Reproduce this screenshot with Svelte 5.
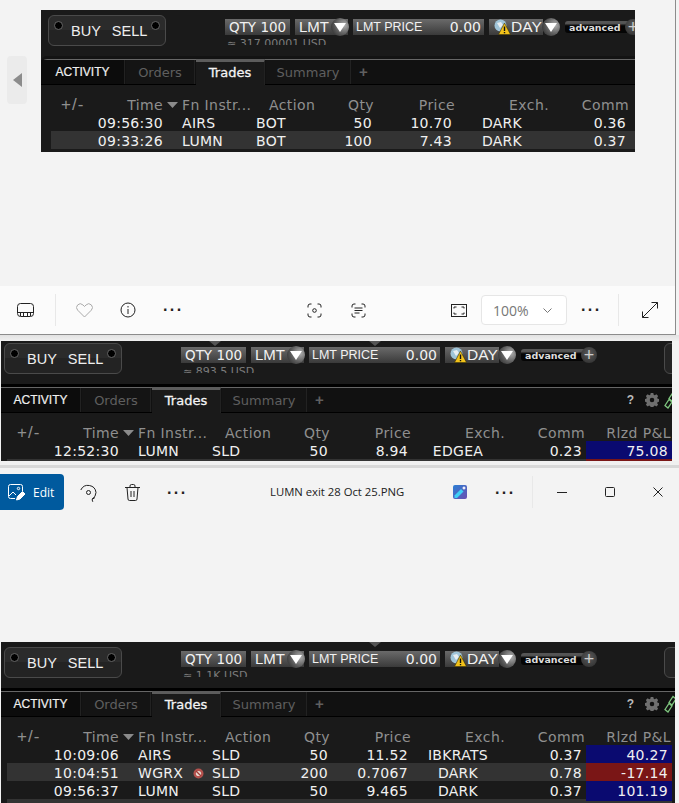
<script>
  const first = [
    { time: "09:56:30", sym: "AIRS", side: "BOT", qty: "50", price: "10.70", exch: "DARK", comm: "0.36" },
    { time: "09:33:26", sym: "LUMN", side: "BOT", qty: "100", price: "7.43", exch: "DARK", comm: "0.37" },
    { blank: true },
  ];
  const second = [
    { time: "12:52:30", sym: "LUMN", side: "SLD", qty: "50", price: "8.94", exch: "EDGEA", comm: "0.23", pnl: "75.08" },
    { blank: true, pnl: "", loss: true },
  ];
  const third = [
    { time: "10:09:06", sym: "AIRS", side: "SLD", qty: "50", price: "11.52", exch: "IBKRATS", comm: "0.37", pnl: "40.27" },
    { time: "10:04:51", sym: "WGRX", flag: true, side: "SLD", qty: "200", price: "0.7067", exch: "DARK", comm: "0.78", pnl: "-17.14", loss: true },
    { time: "09:56:37", sym: "LUMN", side: "SLD", qty: "50", price: "9.465", exch: "DARK", comm: "0.37", pnl: "101.19" },
    { blank: true },
  ];
</script>

{#snippet tradePanel(kind, usd, rows, full)}
  <section class="panel {kind}">
    <div class="order-bar">
      <div class="buysell">
        <i class="hole left"></i>
        <span>BUY</span><span class="sell">SELL</span>
        <i class="hole right"></i>
      </div>
      <div class="params">
        <div class="chips">
          <div class="chip qty">QTY 100</div>
          <div class="chip lmt">LMT{@render drop()}</div>
          <div class="chip price"><span>LMT PRICE</span><b>0.00</b></div>
          <div class="chip day">
            <svg width="17" height="16" viewBox="0 0 17 16">
              <circle cx="6.500" cy="6.500" r="6" fill="#9fc4d8" />
              <path d="M3 4l4-1 2 3-3 3zM9 9l3-1v3z" fill="#e8eef2" />
              <path d="M10.500 4l6 11.500h-12z" fill="#f2c21a" stroke="#3a3000" stroke-width=".6" />
              <path d="M10.500 7.500v4.500M10.500 13v1.200" stroke="#111" stroke-width="1.400" />
            </svg>
            <span>DAY</span>{@render drop()}
          </div>
          <div class="advanced"><span>advanced</span><i class="plus-btn">+</i></div>
        </div>
        <div class="usd">≈ {usd} USD</div>
      </div>
      <div class="next-btn"></div>
    </div>
    <div class="tabs">
      <div class="tab activity">ACTIVITY</div>
      <div class="tab orders">Orders</div>
      <div class="tab active">Trades</div>
      <div class="tab summary">Summary</div>
      <div class="add-tab">+</div>
      {#if full}
        <div class="tools">
          <span class="help">?</span>
          <svg class="gear" width="14" height="14" viewBox="0 0 16 16">
            <path fill="#6f6f6f" fill-rule="evenodd" d="M6.500 0h3l.4 2 1.300.6 1.800-1.100 2 2-1.100 1.800.6 1.300 2 .4v3l-2 .4-.6 1.300 1.100 1.800-2 2-1.800-1.100-1.300.6-.4 2h-3l-.4-2-1.300-.6-1.800 1.100-2-2 1.100-1.800-.6-1.300-2-.4v-3l2-.4.6-1.300-1.100-1.800 2-2 1.800 1.100 1.300-.6zM8 5.400a2.600 2.600 0 1 0 0 5.200 2.600 2.600 0 0 0 0-5.200z" />
          </svg>
          <svg class="link" width="14" height="18" viewBox="0 0 14 18">
            <path d="M9 1.500l3 2.500-4 6-3-2.500zM5 8.500l3 2.500-4 6-3-2.500z" fill="none" stroke="#7fc77f" stroke-width="1.300" />
          </svg>
        </div>
      {/if}
    </div>
    <div class="head cols-head">
      <span class="pm">+/-</span>
      <span class="r">Time</span>
      <svg class="sort" width="11" height="6" viewBox="0 0 11 6"><path d="M0 0h11L5.500 6z" fill="#8a8a8a" /></svg>
      <span>Fn Instr...</span>
      <span>Action</span>
      <span class="r">Qty</span>
      <span class="r">Price</span>
      <span class="r">Exch.</span>
      <span class="r">Comm</span>
      {#if full}<span class="r">Rlzd P&amp;L</span>{/if}
    </div>
    <div class="rows">
      {#each rows as row}
        <div class="row cols-row">
          {#if !row.blank}
            <span class="r">{row.time}</span>
            <span class="sym">{row.sym}
              {#if row.flag}
                <svg width="11" height="11" viewBox="0 0 11 11">
                  <circle cx="5.500" cy="5.500" r="5" fill="#b5524e" />
                  <circle cx="5.500" cy="5.500" r="2.600" fill="#e8d8d0" />
                  <path d="M3 3l5 5" stroke="#a03a36" stroke-width="1.200" />
                </svg>
              {/if}
            </span>
            <span>{row.side}</span>
            <span class="r">{row.qty}</span>
            <span class="r">{row.price}</span>
            <span class="c">{row.exch}</span>
            <span class="r">{row.comm}</span>
          {:else}
            <span></span><span></span><span></span><span></span><span></span><span></span><span></span>
          {/if}
          {#if row.pnl !== undefined}
            <span class="pnl" class:loss={row.loss}>{row.pnl}</span>
          {/if}
        </div>
      {/each}
    </div>
    <i class="caret c1"></i>
    <i class="caret c2"></i>
  </section>
{/snippet}

{#snippet drop()}
  <i class="drop"><svg width="12" height="9" viewBox="0 0 12 9"><path d="M0 0h12L6 9z" fill="#fff" /></svg></i>
{/snippet}

<div class="page">
  <div class="viewer">
    <div class="stage">
      <div class="pager">
        <svg width="9" height="14" viewBox="0 0 9 14"><path d="M9 0v14L0 7z" fill="#8c8c8c" /></svg>
      </div>
      {@render tradePanel("p-first", "317.00001", first, false)}
    </div>
    <div class="viewer-bar">
      <svg class="film" width="17" height="14" viewBox="0 0 17 14" fill="none" stroke="#222">
        <rect x=".5" y=".5" width="16" height="13" rx="3" />
        <path d="M.5 9.500h16M3.500 10v3M6.500 10v3M10.500 10v3M13.500 10v3" />
      </svg>
      <i class="rule r1"></i>
      <svg class="heart" width="17" height="15" viewBox="0 0 17 15" fill="none" stroke="#aaa">
        <path d="M8.500 14L1.700 7.200a3.700 3.700 0 0 1 5.200-5.300l1.600 1.600 1.600-1.600a3.700 3.700 0 0 1 5.200 5.300z" />
      </svg>
      <svg class="info" width="16" height="16" viewBox="0 0 16 16" fill="none" stroke="#222">
        <circle cx="8" cy="8" r="7" />
        <path d="M8 7v5M8 4v1.500" />
      </svg>
      <span class="dots d1">···</span>
      <svg class="scan" width="15" height="15" viewBox="0 0 15 15" fill="none" stroke="#222">
        <path d="M1 4.500V3a2 2 0 0 1 2-2h1.500M10.500 1H12a2 2 0 0 1 2 2v1.500M14 10.500V12a2 2 0 0 1-2 2h-1.500M4.500 14H3a2 2 0 0 1-2-2v-1.500" />
        <circle cx="7.500" cy="7.500" r="1.800" />
      </svg>
      <svg class="textscan" width="15" height="15" viewBox="0 0 15 15" fill="none" stroke="#222">
        <path d="M1 4.500V3a2 2 0 0 1 2-2h1.500M10.500 1H12a2 2 0 0 1 2 2v1.500M14 10.500V12a2 2 0 0 1-2 2h-1.500M4.500 14H3a2 2 0 0 1-2-2v-1.500" />
        <path d="M3.500 5h8M3.500 7.500h8M3.500 10h5" />
      </svg>
      <svg class="fit" width="16" height="13" viewBox="0 0 16 13" fill="none" stroke="#222">
        <rect x=".5" y=".5" width="15" height="12" />
        <path d="M3 4.500V3h2.500M10.500 3H13v1.500M13 8.500V10h-2.500M5.500 10H3V8.500" />
      </svg>
      <div class="zoom-select">
        <span>100%</span>
        <svg width="9" height="5" viewBox="0 0 9 5" fill="none" stroke="#777"><path d="M.5.500l4 4 4-4" /></svg>
      </div>
      <span class="dots d2">···</span>
      <i class="rule r2"></i>
      <svg class="expand" width="16" height="16" viewBox="0 0 16 16" fill="none" stroke="#222">
        <path d="M9.500.500h6v6M15.500.500L.5 15.500M.5 9.500v6h6" />
      </svg>
    </div>
  </div>
  <div class="shadow"></div>

  {@render tradePanel("p-second", "893.5", second, true)}

  <div class="band"></div>
  <div class="photos-bar">
    <button class="edit">
      <svg width="18" height="17" viewBox="0 0 18 17" fill="none" stroke="#fff">
        <path d="M7 14.500H2.500a2 2 0 0 1-2-2v-10a2 2 0 0 1 2-2h10a2 2 0 0 1 2 2V7" />
        <path d="M1 12l4-4 3 3" />
        <circle cx="10.500" cy="4.500" r="1.200" />
        <path d="M8.500 16l1-3.500 5-5 2.500 2.500-5 5z" fill="#fff" />
      </svg>
      <span>Edit</span>
    </button>
    <svg class="rotate" width="17" height="18" viewBox="0 0 17 18" fill="none" stroke="#222">
      <path d="M.8 6A8 8 0 0 1 16 8.500a8 8 0 0 1-4 6.700" />
      <path d="M15 13.500l-3 2 .8 2.300" />
      <circle cx="8.500" cy="8.500" r="2" />
    </svg>
    <svg class="trash" width="15" height="17" viewBox="0 0 15 17" fill="none" stroke="#222">
      <path d="M0 3.500h15M5 3.500V2a1.500 1.500 0 0 1 1.500-1.500h2A1.500 1.500 0 0 1 10 2v1.500M2 3.500l1 11.500a1.500 1.500 0 0 0 1.500 1.500h6A1.500 1.500 0 0 0 12 15l1-11.500M6 7v6M9 7v6" />
    </svg>
    <span class="dots d3">···</span>
    <span class="title">LUMN exit 28 Oct 25.PNG</span>
    <svg class="designer" width="14" height="14" viewBox="0 0 14 14">
      <defs>
        <linearGradient id="designer-bg" x1="0" y1="0" x2="1" y2="1">
          <stop offset="0" stop-color="#2b7fd4" />
          <stop offset="1" stop-color="#6a4fb0" />
        </linearGradient>
      </defs>
      <rect width="14" height="14" rx="2" fill="url(#designer-bg)" />
      <path d="M1.500 10.500L8 4l2.500 2.500L4 13H1.500z" fill="#3ed0f5" />
      <path d="M11 1l.7 1.300L13 3l-1.300.7L11 5l-.7-1.300L9 3l1.300-.7z" fill="#fff" />
    </svg>
    <span class="dots d4">···</span>
    <i class="rule r3"></i>
    <svg class="minimize" width="10" height="10" viewBox="0 0 10 10"><path d="M0 5.500h10" stroke="#222" /></svg>
    <svg class="maximize" width="10" height="10" viewBox="0 0 10 10" fill="none"><rect x=".5" y=".5" width="9" height="9" rx="1" stroke="#222" /></svg>
    <svg class="close" width="10" height="10" viewBox="0 0 10 10"><path d="M.5.500l9 9M9.500.500l-9 9" stroke="#222" /></svg>
  </div>

  {@render tradePanel("p-third", "1.1K", third, true)}
</div>

<style>
  :global(body) {
    margin: 0;
    background: #f3f3f3;
  }

  .page {
    width: 679px;
    height: 803px;
    overflow: hidden;
    background: #f3f3f3;
    font-family: "Open Sans", "Liberation Sans", sans-serif;
  }

  .viewer {
    width: 675px;
    height: 334px;
    border-right: 1px solid #8c8c8c;
    border-bottom: 1px solid #8c8c8c;
    display: flex;
    flex-direction: column;
  }

  .stage {
    height: 286px;
    display: flex;
    align-items: flex-start;
    padding-top: 10px;
    box-sizing: border-box;
  }

  .pager {
    width: 20px;
    height: 48px;
    margin: 46px 14px 0 7px;
    border-radius: 4px;
    background: #ebebeb;
    display: flex;
    align-items: center;
    justify-content: center;
  }

  .viewer-bar {
    height: 48px;
    background: #fbfbfb;
    display: flex;
    align-items: center;
    color: #222;
  }

  .film { margin-left: 17px; }
  .r1 { margin-left: 21px; }
  .heart { margin-left: 20px; }
  .info { margin-left: 27px; }
  .d1 { margin-left: 27px; }
  .scan { margin-left: 126px; }
  .textscan { margin-left: 29px; }
  .fit { margin-left: 85px; }
  .zoom-select { margin-left: 14px; }
  .d2 { margin-left: 14px; }
  .r2 { margin-left: 19px; }
  .expand { margin-left: 23px; }

  .rule {
    display: block;
    width: 1px;
    height: 32px;
    background: #e8e8e8;
  }

  .dots {
    display: block;
    width: 18px;
    font: bold 16px/10px "Liberation Sans", sans-serif;
    letter-spacing: 1.500px;
    color: #222;
    white-space: nowrap;
  }

  .zoom-select {
    width: 86px;
    height: 30px;
    box-sizing: border-box;
    padding: 0 14px 0 11px;
    background: #fff;
    border: 1px solid #e6e6e6;
    border-radius: 4px;
    display: flex;
    align-items: center;
    justify-content: space-between;
    font-size: 14px;
    color: #777;
  }

  .shadow {
    height: 6px;
    background: linear-gradient(#e2e2e2, #f0f0f0);
  }

  .band {
    height: 7px;
    background: linear-gradient(#f0f0f0 55%, #d8d8d8 55%);
  }

  .photos-bar {
    height: 174px;
    box-sizing: border-box;
    padding-top: 6px;
    display: flex;
    align-items: flex-start;
  }

  .photos-bar > svg,
  .photos-bar > .dots,
  .photos-bar > .title,
  .photos-bar > .rule {
    margin-top: 10px;
  }

  .edit {
    width: 64px;
    height: 36px;
    border: 0;
    padding: 0 0 0 8px;
    background: #005a9e;
    border-radius: 0 4px 4px 0;
    color: #fff;
    display: flex;
    align-items: center;
    gap: 7px;
    font: 12px "Open Sans", sans-serif;
  }

  .rotate { margin-left: 16px; }
  .trash { margin-left: 28px; }
  .photos-bar > .d3 { margin-left: 27px; margin-top: 14px; }
  .photos-bar > .title {
    margin-left: 85px;
    width: 137px;
    font-size: 11.300px;
    line-height: 16px;
    color: #222;
    white-space: nowrap;
  }
  .photos-bar > .designer { margin-left: 46px; margin-top: 11px; }
  .photos-bar > .d4 { margin-left: 28px; margin-top: 14px; }
  .photos-bar > .r3 { margin-left: 19px; margin-top: 2px; }
  .photos-bar > .minimize { margin-left: 24px; margin-top: 13px; }
  .photos-bar > .maximize { margin-left: 38px; margin-top: 13px; }
  .photos-bar > .close { margin-left: 38px; margin-top: 13px; }

  /* trading panels */
  .panel {
    --inset: 0px;
    position: relative;
    overflow: hidden;
    flex: none;
    background: #1a1a1a;
    color: #e8e8e8;
    font-family: "DejaVu Sans", Verdana, sans-serif;
  }

  .p-first {
    --inset: 4px;
    width: 594px;
    height: 142px;
  }
  .p-second {
    width: 671px;
    height: 120px;
    margin-left: 1px;
  }
  .p-third {
    width: 674px;
    height: 161px;
    margin-left: 1px;
  }

  .order-bar {
    height: 46px;
    box-sizing: border-box;
    padding: 5px 0 0 calc(3px + var(--inset));
    display: flex;
    align-items: flex-start;
    overflow: hidden;
  }
  .p-second .order-bar {
    height: 43px;
    padding-top: 2px;
  }

  .buysell {
    position: relative;
    flex: none;
    width: 118px;
    height: 31px;
    box-sizing: border-box;
    border: 1px solid #4a4a4a;
    border-radius: 6px;
    background: linear-gradient(#2b2b2b 50%, #232323 50%);
    padding: 6px 0 0 22px;
    font: 14.500px/18px "Liberation Sans", sans-serif;
    color: #eee;
    white-space: nowrap;
  }
  .sell { margin-left: 11px; }
  .hole {
    position: absolute;
    top: 5px;
    width: 7px;
    height: 7px;
    border-radius: 50%;
    background: #000;
    border: 1px solid #666;
  }
  .hole.left { left: 5px; }
  .hole.right { right: 5px; }

  .params {
    flex: none;
    width: 484px;
    margin-left: 59px;
    padding-top: 4px;
  }

  .chips {
    display: flex;
    align-items: flex-start;
    height: 16px;
  }

  .chip {
    height: 16px;
    box-sizing: border-box;
    margin-right: 5px;
    background: linear-gradient(#6a6a6a, #3a3a3a);
    display: flex;
    align-items: center;
    font: 14px/16px "DejaVu Sans", sans-serif;
    color: #f2f2f2;
    white-space: nowrap;
    position: relative;
  }
  .qty { width: 65px; padding-left: 4px; font-size: 13.500px; }
  .lmt { width: 53px; padding-left: 4px; font-family: "Liberation Sans", sans-serif; font-size: 15px; }
  .price {
    width: 131px;
    padding: 0 3px 0 3px;
    justify-content: space-between;
    font: 12.500px/16px "Liberation Sans", sans-serif;
  }
  .price b { font: 14px/16px "DejaVu Sans", sans-serif; }
  .day {
    width: 54px;
    margin-right: 22px;
    padding-left: 5px;
    font-family: "Liberation Sans", sans-serif;
    font-size: 15.500px;
  }

  .drop {
    position: absolute;
    left: 36px;
    top: -1px;
    width: 18px;
    height: 18px;
    border-radius: 50%;
    background: radial-gradient(circle at 72% 40%, #b0b0b0, #585858 55%, #222);
    display: flex;
    align-items: center;
    justify-content: center;
  }
  .day .drop { left: 53px; }

  .advanced {
    position: relative;
    width: 64px;
    height: 12px;
    margin-top: 2px;
    background: linear-gradient(#555 20%, #050505 40%);
    border-radius: 3px 0 0 3px;
    font: bold 9.500px/13px "DejaVu Sans", sans-serif;
    color: #ddd;
    padding-left: 4px;
    box-sizing: border-box;
    white-space: nowrap;
  }
  .plus-btn {
    position: absolute;
    left: 60px;
    top: -2px;
    width: 16px;
    height: 16px;
    border-radius: 50%;
    background: radial-gradient(circle at 50% 40%, #5a5a5a, #2a2a2a);
    font: normal 18px/16px "Liberation Sans", sans-serif;
    text-align: center;
    color: #ccc;
  }

  .usd {
    height: 7px;
    overflow: hidden;
    margin: 3px 0 0 2px;
    font: 11px/12px "DejaVu Sans", sans-serif;
    color: #7c7c7c;
  }

  .next-btn {
    flex: none;
    width: 30px;
    height: 31px;
    margin-left: -1px;
    border: 1px solid #4a4a4a;
    border-radius: 6px;
    background: #242424;
    box-sizing: border-box;
  }

  .tabs {
    height: 26px;
    margin-top: 3px;
    box-sizing: border-box;
    border-top: 1px solid #666;
    border-bottom: 1px solid #000;
    background: #111;
    box-shadow: 0 -3px 0 #000;
    display: flex;
    align-items: stretch;
    position: relative;
  }
  .p-first .tabs {
    box-shadow: 0 -3px 0 #131313;
    border-top-left-radius: 6px;
  }

  .tab {
    flex: none;
    box-sizing: border-box;
    width: 69px;
    margin-right: 1px;
    background: #141414;
    border-right: 1px solid #222;
    color: #5f5f5f;
    font: 13px/26px "DejaVu Sans", sans-serif;
    text-align: center;
  }
  .activity {
    width: calc(80px + var(--inset));
    font: 12px/25px "Liberation Sans", sans-serif;
    color: #f0f0f0;
    background: #0c0c0c;
    -webkit-text-stroke: .2px #f0f0f0;
  }
  .active {
    background: #1a1a1a;
    color: #f4f4f4;
    border-top: 3px solid #5c5c5c;
    margin-top: -1px;
    line-height: 22px;
    height: 26px;
    font-size: 13px;
    -webkit-text-stroke: .3px #f4f4f4;
  }
  .summary { width: 85px; }

  .add-tab {
    flex: none;
    margin-left: 7px;
    color: #5f5f5f;
    font: bold 15px/24px "Liberation Sans", sans-serif;
  }

  .tools {
    display: flex;
    align-items: center;
    margin-left: 303px;
    height: 24px;
    flex: none;
  }
  .help {
    width: 8px;
    font: bold 12px/24px "Liberation Sans", sans-serif;
    color: #bbb;
  }
  .tools svg { flex: none; }
  .gear { margin-left: 10px; }
  .link { margin-left: 5px; }

  .head {
    height: 28px;
    padding-top: 11px;
    box-sizing: border-box;
    color: #8f8f8f;
    font-size: 14px;
    line-height: 18px;
    letter-spacing: .4px;
    white-space: nowrap;
  }

  .cols-head {
    display: grid;
    grid-template-columns: 40px 72px 19px 87px 61px 44px 81px 94px 80px 86px;
    padding-left: calc(6px + var(--inset));
    align-items: center;
  }
  .pm {
    padding-left: 10px;
    font-family: "Liberation Sans", sans-serif;
    font-size: 17px;
    letter-spacing: 1px;
  }
  .sort { margin-left: 4px; }

  .r { text-align: right; }
  .c { text-align: center; }

  .rows {
    padding-left: calc(6px + var(--inset));
  }

  .cols-row {
    display: grid;
    grid-template-columns: 112px 93px 72px 44px 80px 100px 74px 90px;
    height: 18px;
    line-height: 20px;
    font-size: 14px;
    letter-spacing: .3px;
    white-space: nowrap;
    color: #f0f0f0;
  }
  .p-first .cols-row { width: 584px; }
  .p-second .cols-row,
  .p-third .cols-row { width: 665px; }

  .cols-row:nth-child(even) { background: #333; }

  .sym {
    padding-left: 19px;
    display: flex;
    align-items: flex-start;
    gap: 10px;
  }
  .sym svg { margin-top: 5px; }

  .pnl {
    margin-left: 4px;
    padding-right: 4px;
    text-align: right;
    background: #0a0a70;
  }
  .pnl.loss { background: #7a1616; }

  .caret {
    display: none;
    position: absolute;
    top: 0;
    width: 0;
    height: 0;
    border-left: 6px solid transparent;
    border-right: 6px solid transparent;
    border-top: 5px solid #555;
  }
  .c1 { left: 208px; }
  .c2 { left: 368px; }
  .p-second .c1,
  .p-second .c2,
  .p-third .c2 { display: block; }
</style>
